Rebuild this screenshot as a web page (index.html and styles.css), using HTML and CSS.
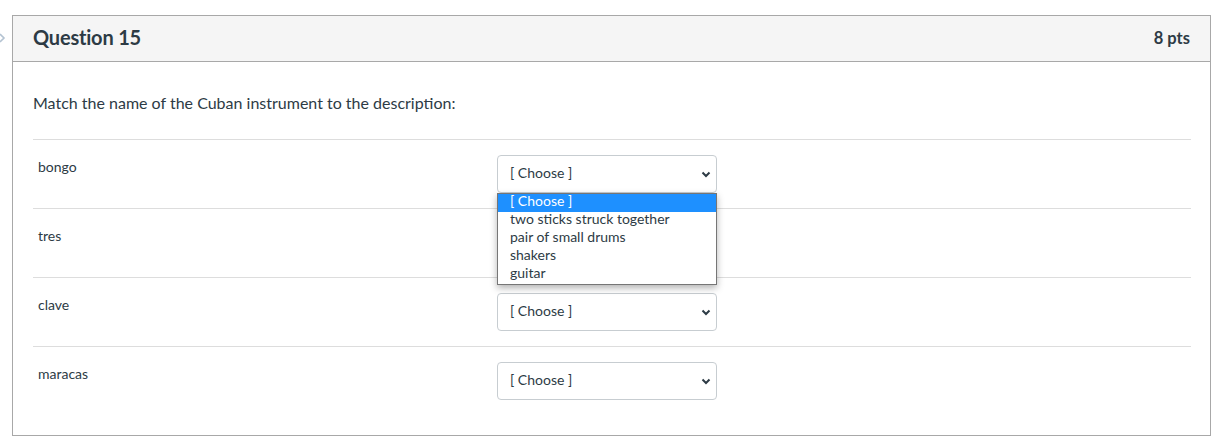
FILE: index.html
```html
<!DOCTYPE html>
<html lang="en">
<head>
    <meta charset="utf-8">
    <title>Question 15</title>
    <link rel="stylesheet" href="styles.css">
</head>
<body>
<div class="q-wrap">
    <svg class="q-flag" width="8" height="10" viewBox="0 0 8 10"><path d="M1 1 L5 5 L1 9" fill="none" stroke="#b4c3d2" stroke-width="1.6"/></svg>
    <div class="q-box">
        <div class="q-header">
            <h2>Question 15</h2>
            <span class="q-pts">8 pts</span>
        </div>
        <div class="q-body">
            <p class="q-text">Match the name of the Cuban instrument to the description:</p>

            <div class="q-row">
                <div class="q-label">bongo</div>
                <div class="q-select open">
                    <span>[ Choose ]</span>
                    <svg class="q-caret" width="10" height="7" viewBox="0 0 10 7"><path d="M1.5 1.5 L5 5 L8.5 1.5" fill="none" stroke="#2d3b45" stroke-width="2"/></svg>
                    <ul class="q-options">
                        <li class="active">[ Choose ]</li>
                        <li>two sticks struck together</li>
                        <li>pair of small drums</li>
                        <li>shakers</li>
                        <li>guitar</li>
                    </ul>
                </div>
            </div>
            <div class="q-row">
                <div class="q-label">tres</div>
                <div class="q-select">
                    <span>[ Choose ]</span>
                    <svg class="q-caret" width="10" height="7" viewBox="0 0 10 7"><path d="M1.5 1.5 L5 5 L8.5 1.5" fill="none" stroke="#2d3b45" stroke-width="2"/></svg>
                </div>
            </div>
            <div class="q-row">
                <div class="q-label">clave</div>
                <div class="q-select">
                    <span>[ Choose ]</span>
                    <svg class="q-caret" width="10" height="7" viewBox="0 0 10 7"><path d="M1.5 1.5 L5 5 L8.5 1.5" fill="none" stroke="#2d3b45" stroke-width="2"/></svg>
                </div>
            </div>
            <div class="q-row">
                <div class="q-label">maracas</div>
                <div class="q-select">
                    <span>[ Choose ]</span>
                    <svg class="q-caret" width="10" height="7" viewBox="0 0 10 7"><path d="M1.5 1.5 L5 5 L8.5 1.5" fill="none" stroke="#2d3b45" stroke-width="2"/></svg>
                </div>
            </div>
        </div>
    </div>
</div>
</body>
</html>
```

FILE: styles.css
```css
html{margin: 0; padding: 0;}
body{margin: 0; padding: 15px 0 0 12px; background: #fff; font-family: Lato, "Liberation Sans", sans-serif; color: #2d3b45;}
.q-wrap{position: relative; width: 1199px;}
.q-flag{position: absolute; left: -13px; top: 18px;}
.q-box{border: 1px solid #a8a8a8; box-sizing: border-box; width: 1199px;}
.q-header{display: flex; justify-content: space-between; align-items: center; height: 41px; padding: 0 20px 4px; background: #f5f5f5; border-bottom: 1px solid #a8a8a8;}
.q-header h2{margin: 0; font-size: 20px; font-weight: 700; letter-spacing: -0.2px; line-height: 22px;}
.q-pts{font-size: 16.5px; font-weight: 700; line-height: 20px; padding-top: 2px;}
.q-body{padding: 0 19px 20px 20px;}
.q-text{margin: 29px 0 24px; font-size: 16px; line-height: 24px;}
.q-row{display: grid; grid-template-columns: 464px 220px; border-top: 1px solid #dddddd; padding: 15px 0;}
.q-label{padding: 2px 0 0 5px; font-size: 14px; line-height: 20px;}
.q-select{position: relative; display: flex; align-items: center; justify-content: space-between; height: 38px; box-sizing: border-box; padding: 0 5px 3px 12px; border: 1px solid #c7cdd1; border-radius: 4px; font-size: 14px;}
.q-caret{display: block; margin-top: 3px;}
.q-options{position: absolute; left: -1px; top: 37px; z-index: 2; width: 218px; margin: 0; padding: 0; list-style: none; background: #fff; border: 1px solid #767676; box-shadow: 0 3px 7px rgba(0,0,0,0.3);}
.q-options li{height: 18px; line-height: 14px; padding-left: 12px; font-size: 14px; white-space: nowrap;}
.q-options li.active{background: #1e90ff; color: #fff;}
```
